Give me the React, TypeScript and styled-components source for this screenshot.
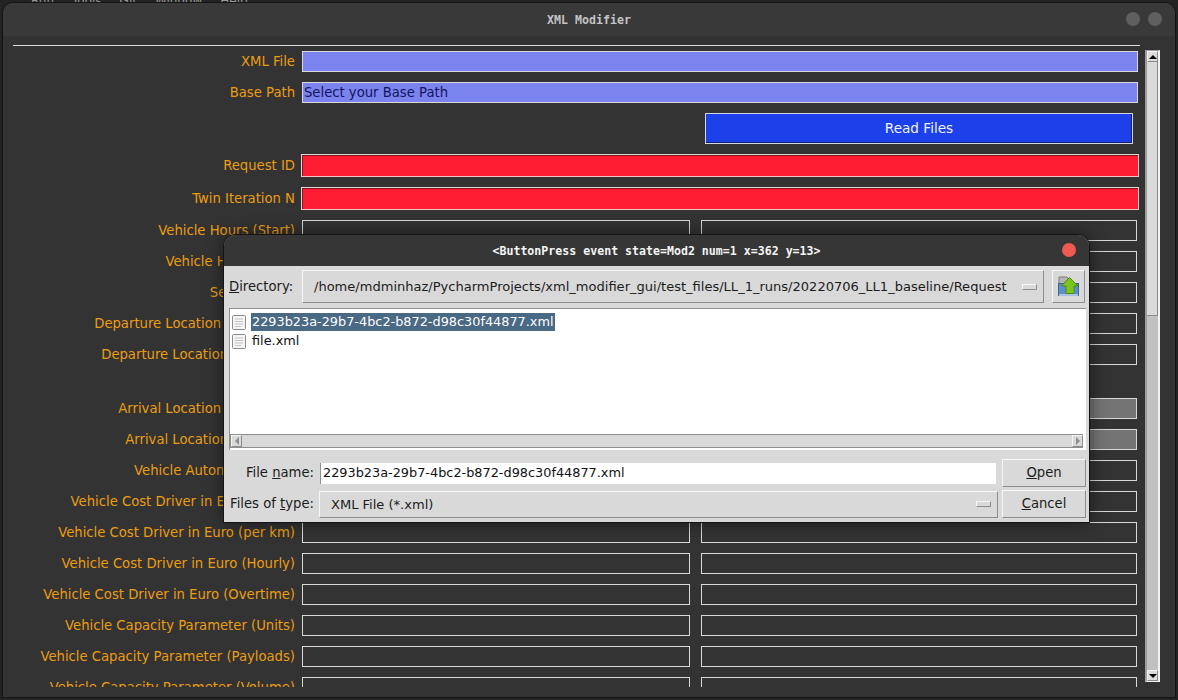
import styled, { createGlobalStyle } from 'styled-components';

const GlobalStyle = createGlobalStyle`
    html, body {
        margin: 0;
        padding: 0;
        background: #232323;
        overflow: hidden;
    }
    * {
        box-sizing: border-box;
    }
`;

const Desktop = styled.div`
    position: relative;
    width: 1178px;
    height: 700px;
    overflow: hidden;
    display: flex;
    flex-direction: column;
    font-family: 'DejaVu Sans', sans-serif;
    font-size: 13.2px;
`;

const BehindTop = styled.div`
    height: 2px;
    overflow: hidden;
    display: flex;
    gap: 18px;
    padding-left: 31px;
    color: #9a9a9a;
    font-size: 12px;
    line-height: 2px;
`;

const BehindBottom = styled.div`
    height: 2px;
    overflow: hidden;
    padding-left: 207px;
    color: #aaa;
    font-size: 11px;
    line-height: 14px;
    white-space: pre;
`;

const Window = styled.div`
    width: 1174px;
    height: 696px;
    margin-left: 2px;
    border: 1px solid #141414;
    border-radius: 11px 11px 0 0;
    background: #333333;
    display: flex;
    flex-direction: column;
    overflow: hidden;
`;

const TitleBar = styled.div`
    position: relative;
    flex: 0 0 33px;
    background: #393939;
    display: flex;
    align-items: center;
    justify-content: center;
`;

const TitleText = styled.span<{ $bright?: boolean }>`
    font-family: 'DejaVu Sans Mono', monospace;
    font-weight: bold;
    font-size: 11.6px;
    color: ${(p) => (p.$bright ? '#f4f4f4' : '#c4c4c4')};
`;

const WindowButtons = styled.div`
    position: absolute;
    right: 13px;
    top: 9px;
    display: flex;
    gap: 8px;
`;

const Dot = styled.span<{ $color: string }>`
    display: block;
    width: 14px;
    height: 14px;
    border-radius: 50%;
    background: ${(p) => p.$color};
`;

const Content = styled.div`
    display: flex;
    height: 651px;
    padding: 9px 0 0 10px;
    overflow: hidden;
`;

const Main = styled.div`
    width: 1127px;
    display: flex;
    flex-direction: column;
`;

const Rule = styled.div`
    flex: 0 0 1px;
    background: #dcdcdc;
`;

const Form = styled.div`
    width: 1125px;
    margin-top: 5px;
    display: flex;
    flex-direction: column;
    gap: 10px;
`;

const Row = styled.div`
    display: flex;
    align-items: center;
    flex: none;
`;

const ButtonRow = styled(Row)`
    justify-content: flex-end;
    padding-right: 5px;
`;

const Spacer = styled.div`
    height: 13px;
    flex: none;
`;

const Label = styled.div`
    width: 282px;
    margin-right: 8px;
    text-align: right;
    white-space: nowrap;
    color: #ec9d10;
    direction: rtl;
    unicode-bidi: plaintext;
`;

const Entry = styled.div<{ $w?: number; $fill?: string }>`
    height: 21px;
    width: ${(p) => (p.$w ? `${p.$w}px` : 'auto')};
    flex: ${(p) => (p.$w ? 'none' : '1')};
    margin-left: -1px;
    border: 1px solid #d9d9d9;
    background: ${(p) => p.$fill ?? '#333333'};
    color: #14145e;
    padding-left: 1px;
    line-height: 20px;
`;

const RedEntry = styled.div`
    height: 23px;
    flex: 1;
    margin: 0 -1px 0 -2px;
    background: #ff1d33;
    border: 1px solid;
    border-color: #d8d8d8 #f3c4c8 #f3c4c8 #d8d8d8;
    box-shadow: inset 1px 1px 0 #8c1420;
`;

const Pair = styled.div`
    display: flex;
    gap: 12px;
`;

const ReadButton = styled.div`
    width: 428px;
    height: 31px;
    background: #1c40ea;
    border: 1px solid #d4d4e4;
    box-shadow: inset -1px -1px 0 #12206e;
    color: #f2f2ff;
    font-size: 13.6px;
    padding-bottom: 2px;
    display: flex;
    align-items: center;
    justify-content: center;
`;

const VScroll = styled.div`
    width: 15px;
    height: 632px;
    margin: 5px 0 0 5px;
    flex: none;
    display: flex;
    flex-direction: column;
    background: #c1c1c1;
    border-right: 2px solid #f2f2f2;
    border-left: 2px solid #9c9c9c;
    border-top: 1px solid #9c9c9c;
    border-bottom: 1px solid #f2f2f2;
`;

const VArrow = styled.div`
    flex: 0 0 11px;
    background: #dcdcdc;
    border: 1px solid #8a8a8a;
    border-color: #f4f4f4 #8a8a8a #8a8a8a #f4f4f4;
    display: flex;
    align-items: center;
    justify-content: center;
`;

const Thumb = styled.div`
    height: 254px;
    background: #dadada;
    border-bottom: 1px solid #8a8a8a;
    border-right: 1px solid #8a8a8a;
`;

const Track = styled.div`
    flex: 1;
`;

const Tri = styled.span<{ $dir: 'up' | 'down' | 'left' | 'right'; $color?: string }>`
    display: block;
    width: 0;
    height: 0;
    border-style: solid;
    border-color: transparent;
    ${(p) => {
        const c = p.$color ?? '#000';
        if (p.$dir === 'up') return `border-width: 0 4px 4px; border-bottom-color: ${c};`;
        if (p.$dir === 'down') return `border-width: 4px 4px 0; border-top-color: ${c};`;
        if (p.$dir === 'left') return `border-width: 4px 4px 4px 0; border-right-color: ${c};`;
        return `border-width: 4px 0 4px 4px; border-left-color: ${c};`;
    }}
`;

/* file dialog floating over the main window */
const Dialog = styled.div`
    position: absolute;
    left: 224px;
    top: 235px;
    width: 865px;
    height: 287px;
    border-radius: 11px 11px 0 0;
    background: #d9d9d9;
    outline: 1px solid #141414;
    box-shadow: 0 0 18px rgba(0, 0, 0, 0.55);
    display: flex;
    flex-direction: column;
    color: #1c1c1c;
`;

const DialogTitle = styled.div`
    position: relative;
    flex: 0 0 31px;
    border-radius: 11px 11px 0 0;
    background: #363636;
    display: flex;
    align-items: center;
    justify-content: center;
`;

const CloseDot = styled(Dot)`
    position: absolute;
    right: 13px;
    top: 8px;
`;

const DialogBody = styled.div`
    flex: 1;
    display: flex;
    flex-direction: column;
    padding: 4px 3px 4px 5px;
`;

const DirRow = styled.div`
    display: flex;
    align-items: center;
    height: 33px;
`;

const DirLabel = styled.div`
    width: 73px;
`;

const raised = `
    border: 1px solid;
    border-color: #f6f6f6 #8e8e8e #8e8e8e #f6f6f6;
    background: #d9d9d9;
`;

const Combo = styled.div<{ $w: number; $h: number; $pad: number }>`
    ${raised}
    width: ${(p) => p.$w}px;
    height: ${(p) => p.$h}px;
    padding: 0 6px 0 ${(p) => p.$pad}px;
    display: flex;
    align-items: center;
    justify-content: space-between;
    color: #1c1c1c;
    white-space: nowrap;
`;

const ComboText = styled.span`
    font-size: 13.04px;
`;

const ComboMark = styled.span`
    ${raised}
    display: block;
    width: 15px;
    height: 6px;
    flex: none;
`;

const UpButton = styled.div`
    ${raised}
    width: 33px;
    height: 33px;
    margin-left: 8px;
    display: flex;
    align-items: center;
    justify-content: center;
`;

const ListBox = styled.div`
    margin-top: 5px;
    width: 857px;
    height: 142px;
    background: #ffffff;
    border-top: 1px solid #8e8e8e;
    border-left: 1px solid #8e8e8e;
    display: flex;
    flex-direction: column;
`;

const Files = styled.div`
    flex: 1;
    padding: 4px 0 0 1px;
    display: flex;
    flex-direction: column;
    gap: 1px;
`;

const FileRow = styled.div`
    height: 18px;
    display: flex;
    align-items: center;
    gap: 4px;
    color: #111;
`;

const FileName = styled.span<{ $selected?: boolean }>`
    padding: 0 1px;
    font-size: 12.85px;
    line-height: 18px;
    background: ${(p) => (p.$selected ? '#4a6984' : 'transparent')};
    color: ${(p) => (p.$selected ? '#ffffff' : '#111')};
`;

const HScroll = styled.div`
    height: 14px;
    margin: 0 3px 2px 0;
    border-top: 1px solid #8e8e8e;
    border-bottom: 1px solid #8e8e8e;
    border-left: 1px solid #8e8e8e;
    background: #d9d9d9;
    display: flex;
    justify-content: space-between;
`;

const HArrow = styled.div`
    width: 11px;
    border: 1px solid;
    border-color: #f4f4f4 #8e8e8e #8e8e8e #f4f4f4;
    display: flex;
    align-items: center;
    justify-content: center;
`;

const BottomRow = styled.div`
    display: flex;
    align-items: center;
`;

const NameRow = styled(BottomRow)`
    margin-top: 9px;
    height: 28px;
`;

const TypeRow = styled(BottomRow)`
    margin-top: 3px;
    height: 28px;
`;

const FieldLabel = styled.div`
    width: 85px;
    margin-top: -1px;
    text-align: right;
    white-space: nowrap;
    flex: none;
`;

const NameInput = styled.div`
    width: 676px;
    height: 21px;
    margin-left: 6px;
    background: #ffffff;
    border-left: 1px solid #8e8e8e;
    padding-left: 2px;
    font-size: 12.85px;
    line-height: 19px;
    color: #111;
`;

const TypeCombo = styled(Combo)`
    margin-left: 5px;
`;

const DialogButton = styled.div`
    ${raised}
    width: 84px;
    height: 28px;
    padding-bottom: 2px;
    display: flex;
    align-items: center;
    justify-content: center;
    color: #1c1c1c;
`;

const OpenButton = styled(DialogButton)`
    margin-left: 6px;
`;

const CancelButton = styled(DialogButton)`
    margin-left: 4px;
`;

const FileIcon = () => (
    <svg width="16" height="16" viewBox="0 0 16 16">
        <rect x="1.5" y="1.5" width="13" height="14" rx="1" fill="#f4f4f4" stroke="#8c8c8c" />
        <path d="M4 5h8M4 7.5h8M4 10h8M4 12.5h6" stroke="#c4c4c4" strokeWidth="1" fill="none" />
    </svg>
);

const FolderUpIcon = () => (
    <svg width="24" height="22" viewBox="0 0 24 22">
        <path d="M2 1h8l2 3v4H2z" fill="#b5b5b5" stroke="#7c7c7c" />
        <rect x="1.5" y="7.5" width="20" height="12" fill="#5c8fcb" stroke="#3f648f" />
        <rect x="2" y="18" width="19" height="2" fill="#a9c3df" />
        <path d="M12.5 1.5 L21 10 H17 V17.5 H9 V10 H4.5 Z" fill="#7ec421" stroke="#4d8a10" strokeWidth="1" />
    </svg>
);

type RowSpec = { label: string; fill?: string } | 'gap';

const pairedRows: RowSpec[] = [
    { label: 'Vehicle Hours (Start)' },
    { label: 'Vehicle Hours (End)' },
    { label: 'Service Time' },
    { label: 'Departure Location (Postcode)' },
    { label: 'Departure Location (Country)' },
    'gap',
    { label: 'Arrival Location (Postcode)', fill: '#747474' },
    { label: 'Arrival Location (Country)', fill: '#747474' },
    { label: 'Vehicle Autonomy (kms)' },
    { label: 'Vehicle Cost Driver in Euro (Fixed)' },
    { label: 'Vehicle Cost Driver in Euro (per km)' },
    { label: 'Vehicle Cost Driver in Euro (Hourly)' },
    { label: 'Vehicle Cost Driver in Euro (Overtime)' },
    { label: 'Vehicle Capacity Parameter (Units)' },
    { label: 'Vehicle Capacity Parameter (Payloads)' },
    { label: 'Vehicle Capacity Parameter (Volume)' },
];

const App = () => {
    return (
        <Desktop>
            <GlobalStyle />
            <BehindTop>
                <span>Run</span>
                <span>Tools</span>
                <span>Git</span>
                <span>Window</span>
                <span>Help</span>
            </BehindTop>
            <Window>
                <TitleBar>
                    <TitleText>XML Modifier</TitleText>
                    <WindowButtons>
                        <Dot $color="#5f5f5f" />
                        <Dot $color="#5f5f5f" />
                    </WindowButtons>
                </TitleBar>
                <Content>
                    <Main>
                        <Rule />
                        <Form>
                            <Row>
                                <Label>XML File</Label>
                                <Entry $fill="#7a83ee" />
                            </Row>
                            <Row>
                                <Label>Base Path</Label>
                                <Entry $fill="#7a83ee">Select your Base Path</Entry>
                            </Row>
                            <ButtonRow>
                                <ReadButton>Read Files</ReadButton>
                            </ButtonRow>
                            <Row>
                                <Label>Request ID</Label>
                                <RedEntry />
                            </Row>
                            <Row>
                                <Label>Twin Iteration N</Label>
                                <RedEntry />
                            </Row>
                            {pairedRows.map((row, index) =>
                                row === 'gap' ? (
                                    <Spacer key={index} />
                                ) : (
                                    <Row key={index}>
                                        <Label>{row.label}</Label>
                                        <Pair>
                                            <Entry $w={388} />
                                            <Entry $w={436} $fill={row.fill} />
                                        </Pair>
                                    </Row>
                                ),
                            )}
                        </Form>
                    </Main>
                    <VScroll>
                        <VArrow>
                            <Tri $dir="up" />
                        </VArrow>
                        <Thumb />
                        <Track />
                        <VArrow>
                            <Tri $dir="down" />
                        </VArrow>
                    </VScroll>
                </Content>
            </Window>
            <BehindBottom>1 T    8388      77 in    8318</BehindBottom>

            <Dialog>
                <DialogTitle>
                    <TitleText $bright>{'<ButtonPress event state=Mod2 num=1 x=362 y=13>'}</TitleText>
                    <CloseDot $color="#ee5a52" />
                </DialogTitle>
                <DialogBody>
                    <DirRow>
                        <DirLabel>
                            <u>D</u>irectory:
                        </DirLabel>
                        <Combo $w={742} $h={33} $pad={11}>
                            <ComboText>/home/mdminhaz/PycharmProjects/xml_modifier_gui/test_files/LL_1_runs/20220706_LL1_baseline/Request</ComboText>
                            <ComboMark />
                        </Combo>
                        <UpButton>
                            <FolderUpIcon />
                        </UpButton>
                    </DirRow>
                    <ListBox>
                        <Files>
                            <FileRow>
                                <FileIcon />
                                <FileName $selected>2293b23a-29b7-4bc2-b872-d98c30f44877.xml</FileName>
                            </FileRow>
                            <FileRow>
                                <FileIcon />
                                <FileName>file.xml</FileName>
                            </FileRow>
                        </Files>
                        <HScroll>
                            <HArrow>
                                <Tri $dir="left" $color="#8e8e8e" />
                            </HArrow>
                            <HArrow>
                                <Tri $dir="right" $color="#8e8e8e" />
                            </HArrow>
                        </HScroll>
                    </ListBox>
                    <NameRow>
                        <FieldLabel>
                            File <u>n</u>ame:
                        </FieldLabel>
                        <NameInput>2293b23a-29b7-4bc2-b872-d98c30f44877.xml</NameInput>
                        <OpenButton>
                            <span>
                                <u>O</u>pen
                            </span>
                        </OpenButton>
                    </NameRow>
                    <TypeRow>
                        <FieldLabel>
                            Files of <u>t</u>ype:
                        </FieldLabel>
                        <TypeCombo $w={679} $h={27} $pad={11}>
                            <ComboText>XML File (*.xml)</ComboText>
                            <ComboMark />
                        </TypeCombo>
                        <CancelButton>
                            <span>
                                <u>C</u>ancel
                            </span>
                        </CancelButton>
                    </TypeRow>
                </DialogBody>
            </Dialog>
        </Desktop>
    );
};

export default App;
